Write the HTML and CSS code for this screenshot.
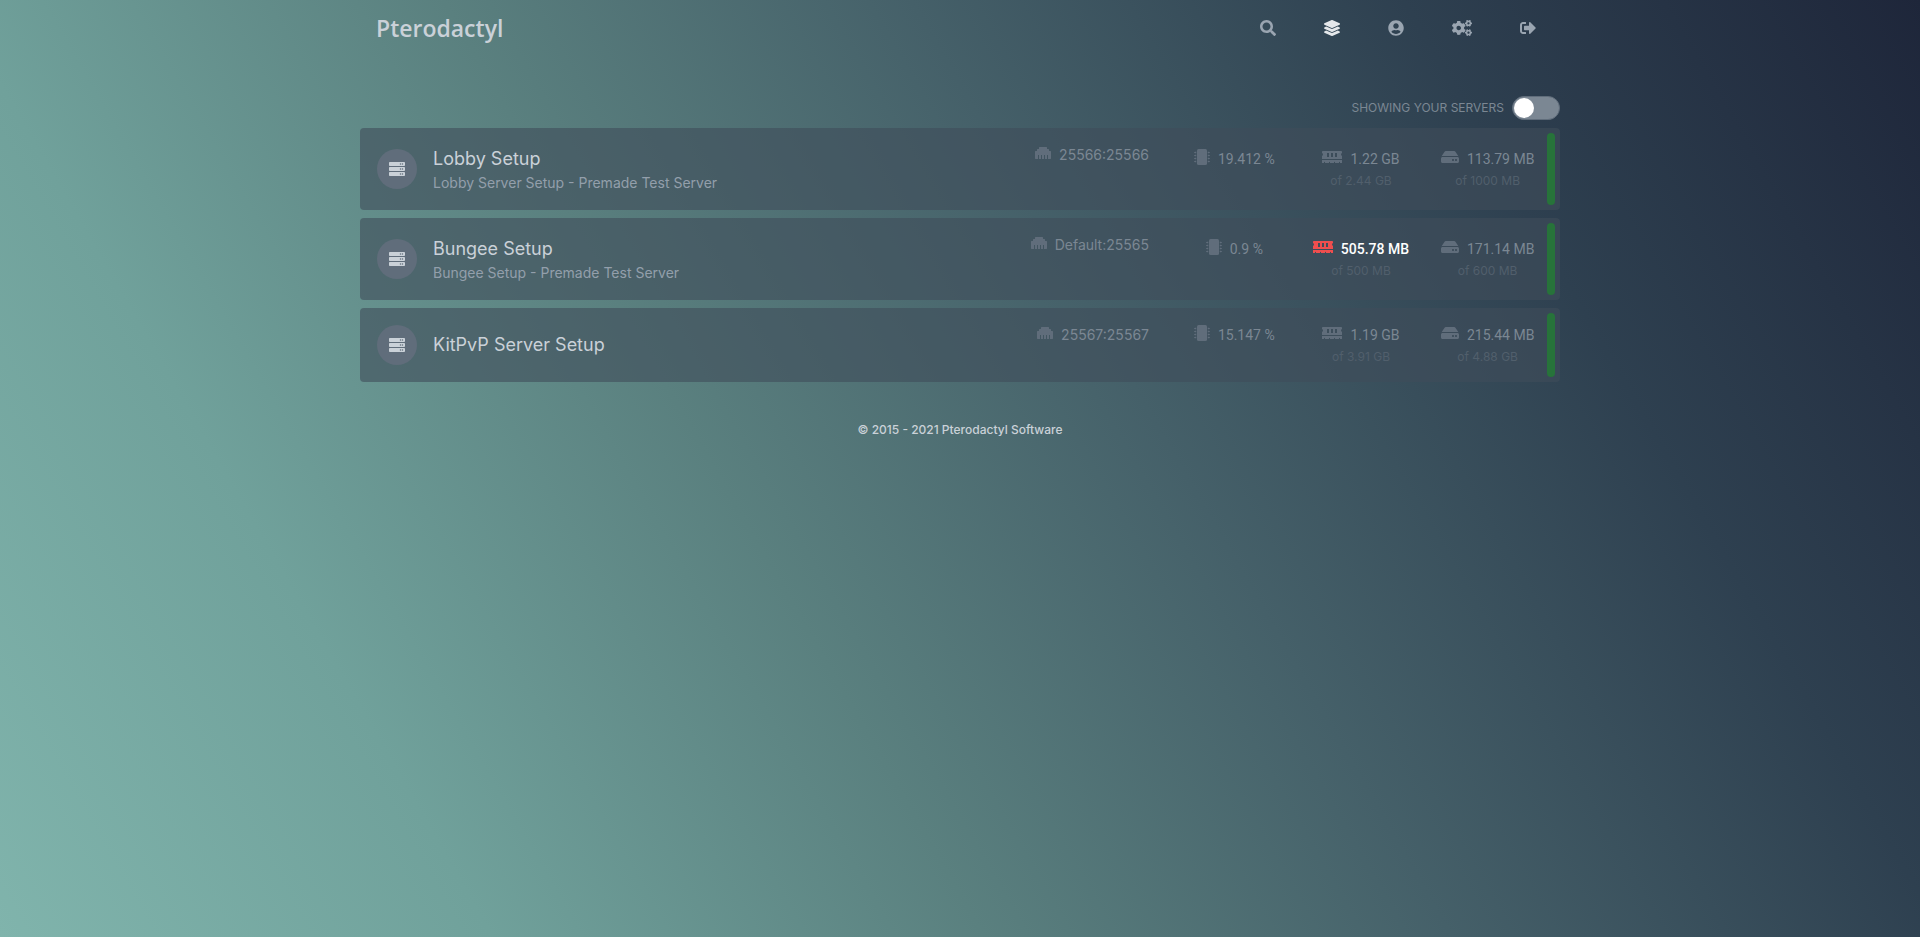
FILE: index.html
```html
<!DOCTYPE html>
<html lang="en">
<head>
<meta charset="utf-8">
<title>Pterodactyl</title>
<meta name="viewport" content="width=device-width, initial-scale=1">
<link rel="stylesheet" href="styles.css">
</head>
<body>
<svg class="sprite" aria-hidden="true">
  <symbol id="search" viewBox="0 0 512 512"><path d="M505 442.7L405.3 343c-4.5-4.5-10.6-7-17-7H372c27.6-35.3 44-79.7 44-128C416 93.1 322.9 0 208 0S0 93.1 0 208s93.1 208 208 208c48.3 0 92.7-16.4 128-44v16.3c0 6.4 2.5 12.5 7 17l99.7 99.7c9.4 9.4 24.6 9.4 33.9 0l28.3-28.3c9.4-9.4 9.4-24.6.1-34zM208 336c-70.7 0-128-57.2-128-128 0-70.7 57.2-128 128-128 70.7 0 128 57.2 128 128 0 70.7-57.2 128-128 128z"/></symbol>
  <symbol id="layers" viewBox="0 0 512 512"><path d="M12.41 148.02l232.94 105.67c6.8 3.09 14.49 3.09 21.29 0l232.94-105.67c16.55-7.51 16.55-32.52 0-40.03L266.65 2.31a25.607 25.607 0 0 0-21.29 0L12.41 107.98c-16.55 7.51-16.55 32.53 0 40.04zm487.18 88.28l-58.09-26.33-161.64 73.27c-7.56 3.43-15.59 5.17-23.86 5.17s-16.29-1.74-23.86-5.17L70.51 209.97l-58.1 26.33c-16.55 7.5-16.55 32.5 0 40l232.94 105.59c6.8 3.08 14.49 3.08 21.29 0L499.59 276.3c16.55-7.5 16.55-32.5 0-40zm0 127.8l-57.87-26.23-161.86 73.37c-7.56 3.43-15.59 5.17-23.86 5.17s-16.29-1.74-23.86-5.17L70.29 337.87 12.41 364.1c-16.55 7.5-16.55 32.5 0 40l232.94 105.59c6.8 3.08 14.49 3.08 21.29 0L499.59 404.1c16.55-7.5 16.55-32.5 0-40z"/></symbol>
  <symbol id="user" viewBox="0 0 496 512"><path d="M248 8C111 8 0 119 0 256s111 248 248 248 248-111 248-248S385 8 248 8zm0 96c48.6 0 88 39.4 88 88s-39.4 88-88 88-88-39.4-88-88 39.4-88 88-88zm0 344c-58.7 0-111.3-26.6-146.5-68.2 18.8-35.4 55.6-59.8 98.5-59.8 2.4 0 4.8.4 7.1 1.1 13 4.2 26.6 6.9 40.9 6.9 14.3 0 28-2.7 40.9-6.9 2.3-.7 4.7-1.1 7.1-1.1 42.9 0 79.7 24.4 98.5 59.8C359.3 421.4 306.7 448 248 448z"/></symbol>
  <symbol id="cogs" viewBox="0 0 640 512">
    <path id="small-cog" d="M512.1 191l-8.2 14.3c-3 5.3-9.4 7.5-15.1 5.4-11.8-4.4-22.6-10.7-32.1-18.6-4.6-3.8-5.8-10.5-2.8-15.7l8.2-14.3c-6.9-8-12.3-17.3-15.9-27.4h-16.5c-6 0-11.2-4.3-12.2-10.3-2-12-2.1-24.6 0-37.1 1-6 6.2-10.4 12.2-10.4h16.5c3.6-10.1 9-19.4 15.9-27.4l-8.2-14.3c-3-5.2-1.9-11.9 2.8-15.7 9.5-7.9 20.4-14.2 32.1-18.6 5.7-2.1 12.1.1 15.1 5.4l8.2 14.3c10.5-1.9 21.2-1.9 31.7 0L552 6.3c3-5.3 9.4-7.5 15.1-5.4 11.8 4.4 22.6 10.7 32.1 18.6 4.6 3.8 5.8 10.5 2.8 15.7l-8.2 14.3c6.9 8 12.3 17.3 15.9 27.4h16.5c6 0 11.2 4.3 12.2 10.3 2 12 2.1 24.6 0 37.1-1 6-6.2 10.4-12.2 10.4h-16.5c-3.6 10.1-9 19.4-15.9 27.4l8.2 14.3c3 5.2 1.9 11.9-2.8 15.7-9.5 7.9-20.4 14.2-32.1 18.6-5.7 2.1-12.1-.1-15.1-5.4l-8.2-14.3c-10.4 1.9-21.2 1.9-31.7 0zm-10.5-58.8c38.5 29.6 82.4-14.3 52.8-52.8-38.5-29.7-82.4 14.3-52.8 52.8z"/>
    <use href="#small-cog" y="299"/>
    <path d="M386.3 286.1l33.7 16.8c10.1 5.8 14.5 18.1 10.5 29.1-8.9 24.2-26.4 46.4-42.6 65.8-7.4 8.9-20.2 11.1-30.3 5.3l-29.1-16.8c-16 13.7-34.6 24.6-54.9 31.7v33.6c0 11.6-8.3 21.6-19.7 23.6-24.6 4.2-50.4 4.4-75.9 0-11.5-2-20-11.9-20-23.6V418c-20.3-7.2-38.9-18-54.9-31.7L74 403c-10 5.8-22.9 3.6-30.3-5.3-16.2-19.4-33.3-41.6-42.2-65.7-4-10.9.4-23.2 10.5-29.1l33.3-16.8c-3.9-20.9-3.9-42.4 0-63.4L12 205.8c-10.1-5.8-14.6-18.1-10.5-29 8.9-24.2 26-46.4 42.2-65.8 7.4-8.9 20.2-11.1 30.3-5.3l29.1 16.8c16-13.7 34.6-24.6 54.9-31.7V57.1c0-11.5 8.2-21.5 19.6-23.5 24.6-4.2 50.5-4.4 76-.1 11.5 2 20 11.9 20 23.6v33.6c20.3 7.2 38.9 18 54.9 31.7l29.1-16.8c10-5.8 22.9-3.6 30.3 5.3 16.2 19.4 33.2 41.6 42.1 65.8 4 10.9.1 23.2-10 29.1l-33.7 16.8c3.9 21 3.9 42.5 0 63.5zm-117.6 21.1c59.2-77-28.7-164.9-105.7-105.7-59.2 77 28.7 164.9 105.7 105.7z"/>
  </symbol>
  <symbol id="signout" viewBox="0 0 512 512"><path d="M497 273L329 441c-15 15-41 4.5-41-17v-96H152c-13.3 0-24-10.7-24-24v-96c0-13.3 10.7-24 24-24h136V88c0-21.4 25.9-32 41-17l168 168c9.3 9.4 9.3 24.6 0 34zM192 436v-40c0-6.6-5.4-12-12-12H96c-17.7 0-32-14.3-32-32V160c0-17.7 14.3-32 32-32h84c6.6 0 12-5.4 12-12V76c0-6.6-5.4-12-12-12H96c-53 0-96 43-96 96v192c0 53 43 96 96 96h84c6.6 0 12-5.4 12-12z"/></symbol>
  <symbol id="server" viewBox="0 0 512 512">
    <path id="rack" d="M480 160H32c-17.673 0-32-14.327-32-32V64c0-17.673 14.327-32 32-32h448c17.673 0 32 14.327 32 32v64c0 17.673-14.327 32-32 32zm-48-88c-13.255 0-24 10.745-24 24s10.745 24 24 24 24-10.745 24-24-10.745-24-24-24zm-64 0c-13.255 0-24 10.745-24 24s10.745 24 24 24 24-10.745 24-24-10.745-24-24-24z"/>
    <use href="#rack" y="160"/><use href="#rack" y="320"/>
  </symbol>
  <symbol id="ethernet" viewBox="0 0 512 512"><path d="M496 192h-48v-48c0-8.8-7.2-16-16-16h-48V80c0-8.8-7.2-16-16-16H144c-8.8 0-16 7.2-16 16v48H80c-8.8 0-16 7.2-16 16v48H16c-8.8 0-16 7.2-16 16v224c0 8.8 7.2 16 16 16h80V320h32v128h64V320h32v128h64V320h32v128h64V320h32v128h80c8.8 0 16-7.2 16-16V208c0-8.8-7.2-16-16-16z"/></symbol>
  <symbol id="chip" viewBox="0 0 512 512">
    <rect x="96" width="320" height="512" rx="48"/>
    <path id="pins" d="M72 88H30a6 6 0 0 0-6 6v6H6a6 6 0 0 0-6 6v12a6 6 0 0 0 6 6h18v6a6 6 0 0 0 6 6h42zM440 88h42a6 6 0 0 1 6 6v6h18a6 6 0 0 1 6 6v12a6 6 0 0 1-6 6h-18v6a6 6 0 0 1-6 6h-42z"/>
    <use href="#pins" y="96"/><use href="#pins" y="192"/><use href="#pins" y="288"/>
  </symbol>
  <symbol id="memory" viewBox="0 0 640 512"><path d="M640 130.94V96c0-17.67-14.33-32-32-32H32c-17.67 0-32 14.33-32 32v34.94c18.6 6.61 32 24.19 32 45.06s-13.4 38.45-32 45.06V320h640v-98.94c-18.6-6.61-32-24.19-32-45.06s13.4-38.45 32-45.06zM224 256h-64V128h64v128zm128 0h-64V128h64v128zm128 0h-64V128h64v128zM0 448h64v-26.67c0-8.84 7.16-16 16-16s16 7.16 16 16V448h128v-26.67c0-8.84 7.16-16 16-16s16 7.16 16 16V448h128v-26.67c0-8.84 7.16-16 16-16s16 7.16 16 16V448h128v-26.67c0-8.84 7.16-16 16-16s16 7.16 16 16V448h64v-96H0v96z"/></symbol>
  <symbol id="disk" viewBox="0 0 576 512"><path d="M576 304v96c0 26.51-21.49 48-48 48H48c-26.51 0-48-21.49-48-48v-96c0-26.51 21.49-48 48-48h480c26.51 0 48 21.49 48 48zm-48-80a79.557 79.557 0 0 1 30.777 6.165L462.25 85.374A48.003 48.003 0 0 0 422.311 64H153.689a48 48 0 0 0-39.938 21.374L17.223 230.165A79.557 79.557 0 0 1 48 224h480zm-48 96c-17.673 0-32 14.327-32 32s14.327 32 32 32 32-14.327 32-32-14.327-32-32-32zm-96 0c-17.673 0-32 14.327-32 32s14.327 32 32 32 32-14.327 32-32-14.327-32-32-32z"/></symbol>
</svg>

<header class="navbar">
  <a class="logo" href="#">Pterodactyl</a>
  <nav class="nav-links">
    <button class="nav-item" type="button" aria-label="Search"><svg class="icon"><use href="#search"/></svg></button>
    <a class="nav-item active" href="#" aria-label="Dashboard"><svg class="icon"><use href="#layers"/></svg></a>
    <a class="nav-item" href="#" aria-label="Account"><svg class="icon"><use href="#user"/></svg></a>
    <a class="nav-item" href="#" aria-label="Admin"><svg class="icon icon-wide"><use href="#cogs"/></svg></a>
    <a class="nav-item" href="#" aria-label="Sign out"><svg class="icon"><use href="#signout"/></svg></a>
  </nav>
</header>

<main class="content">
  <div class="filter">
    <label class="filter-label" for="show-all">Showing your servers</label>
    <input class="switch" id="show-all" type="checkbox">
  </div>

  <div class="servers">
    <a class="server" href="#">
      <span class="badge"><svg class="icon"><use href="#server"/></svg></span>
      <div class="info">
        <p class="name">Lobby Setup</p>
        <p class="description">Lobby Server Setup - Premade Test Server</p>
      </div>
      <div class="address"><svg class="icon"><use href="#ethernet"/></svg>25566:25566</div>
      <div class="metrics">
        <div class="metric"><p class="value"><svg class="icon"><use href="#chip"/></svg>19.412 %</p></div>
        <div class="metric"><p class="value"><svg class="icon icon-wide"><use href="#memory"/></svg>1.22 GB</p><p class="limit">of 2.44 GB</p></div>
        <div class="metric"><p class="value"><svg class="icon icon-disk"><use href="#disk"/></svg>113.79 MB</p><p class="limit">of 1000 MB</p></div>
      </div>
      <span class="status"></span>
    </a>

    <a class="server" href="#">
      <span class="badge"><svg class="icon"><use href="#server"/></svg></span>
      <div class="info">
        <p class="name">Bungee Setup</p>
        <p class="description">Bungee Setup - Premade Test Server</p>
      </div>
      <div class="address"><svg class="icon"><use href="#ethernet"/></svg>Default:25565</div>
      <div class="metrics">
        <div class="metric"><p class="value"><svg class="icon"><use href="#chip"/></svg>0.9 %</p></div>
        <div class="metric"><p class="value alarm"><svg class="icon icon-wide"><use href="#memory"/></svg>505.78 MB</p><p class="limit">of 500 MB</p></div>
        <div class="metric"><p class="value"><svg class="icon icon-disk"><use href="#disk"/></svg>171.14 MB</p><p class="limit">of 600 MB</p></div>
      </div>
      <span class="status"></span>
    </a>

    <a class="server" href="#">
      <span class="badge"><svg class="icon"><use href="#server"/></svg></span>
      <div class="info">
        <p class="name">KitPvP Server Setup</p>
      </div>
      <div class="address"><svg class="icon"><use href="#ethernet"/></svg>25567:25567</div>
      <div class="metrics">
        <div class="metric"><p class="value"><svg class="icon"><use href="#chip"/></svg>15.147 %</p></div>
        <div class="metric"><p class="value"><svg class="icon icon-wide"><use href="#memory"/></svg>1.19 GB</p><p class="limit">of 3.91 GB</p></div>
        <div class="metric"><p class="value"><svg class="icon icon-disk"><use href="#disk"/></svg>215.44 MB</p><p class="limit">of 4.88 GB</p></div>
      </div>
      <span class="status"></span>
    </a>
  </div>
</main>

<footer class="footer"><a href="#">© 2015 - 2021 Pterodactyl Software</a></footer>
</body>
</html>
```
FILE: styles.css
```css
* {
  box-sizing: border-box;
}

body {
  margin: 0;
  min-height: 100vh;
  font-family: Inter, Roboto, "Liberation Sans", sans-serif;
  font-size: 14px;
  line-height: 20px;
  color: #cad1d8;
  background: linear-gradient(60deg, #80b4ac 0%, #70a19b 20%, #5a807f 40%, #456069 59%, #2e4050 79%, #1e263a 100%) fixed;
}

p {
  margin: 0;
}

a {
  color: inherit;
  text-decoration: none;
}

.sprite {
  position: absolute;
  width: 0;
  height: 0;
}

.icon {
  display: block;
  flex: none;
  width: 16px;
  height: 16px;
  fill: currentColor;
}

.icon-wide {
  width: 20px;
}

.icon-disk {
  width: 18px;
}

.navbar {
  display: flex;
  align-items: center;
  justify-content: space-between;
  max-width: 1200px;
  height: 56px;
  margin: 0 auto;
}

.logo {
  padding-left: 16px;
  font-family: "Open Sans", "Noto Sans", sans-serif;
  font-size: 23px;
  font-weight: 600;
  line-height: 32px;
}

.nav-links {
  display: flex;
  align-self: stretch;
}

.nav-item {
  display: flex;
  align-items: center;
  padding: 0 24px;
  border: 0;
  background: none;
  color: #9aa5b1;
}

.nav-item.active {
  color: #e5e8eb;
}

.content {
  max-width: 1200px;
  margin: 40px auto 0;
}

.filter {
  display: flex;
  align-items: center;
  justify-content: flex-end;
  gap: 8px;
  height: 24px;
}

.filter-label {
  font-size: 12px;
  text-transform: uppercase;
  color: #7b8793;
}

.switch {
  appearance: none;
  width: 48px;
  height: 24px;
  margin: 0;
  padding: 1px;
  border: 1px solid #606d7b;
  border-radius: 12px;
  background: #7b8793;
}

.switch::before {
  content: "";
  display: block;
  width: 20px;
  height: 100%;
  border-radius: 10px;
  background: #fff;
}

.servers {
  display: grid;
  gap: 8px;
  margin-top: 8px;
}

.server {
  display: flex;
  align-items: center;
  position: relative;
  padding: 17px;
  border-radius: 4px;
  background: rgba(63, 77, 90, 0.6);
}

.badge {
  display: grid;
  place-items: center;
  flex: none;
  width: 40px;
  height: 40px;
  border-radius: 50%;
  background: #606d7b;
}

.info {
  flex: 1;
  margin-left: 16px;
}

.name {
  font-size: 18px;
  line-height: 28px;
}

.description {
  color: #939fab;
}

.address {
  display: flex;
  align-self: flex-start;
  gap: 8px;
  color: #7b8793;
}

.metrics {
  display: grid;
  grid-template-columns: repeat(3, 1fr);
  flex: none;
  width: 380px;
  margin-left: 22px;
  margin-right: -8px;
}

.metric {
  min-height: 40px;
  text-align: center;
}

.value {
  display: flex;
  justify-content: center;
  gap: 8px;
  font-family: Roboto, "Liberation Sans", sans-serif;
  color: #7b8793;
}

.address .icon,
.value .icon {
  color: #606d7b;
}

.value.alarm {
  font-weight: 500;
  color: #fff;
}

.value.alarm .icon {
  color: #ef4e4e;
}

.limit {
  margin-top: 4px;
  font-size: 12px;
  line-height: 16px;
  color: #515f6c;
}

.status {
  position: absolute;
  top: 5px;
  right: 5px;
  bottom: 5px;
  width: 8px;
  border-radius: 4px;
  background: #27733a;
}

.footer {
  margin-top: 38px;
  text-align: center;
  font-size: 12px;
  font-weight: 500;
}
```
